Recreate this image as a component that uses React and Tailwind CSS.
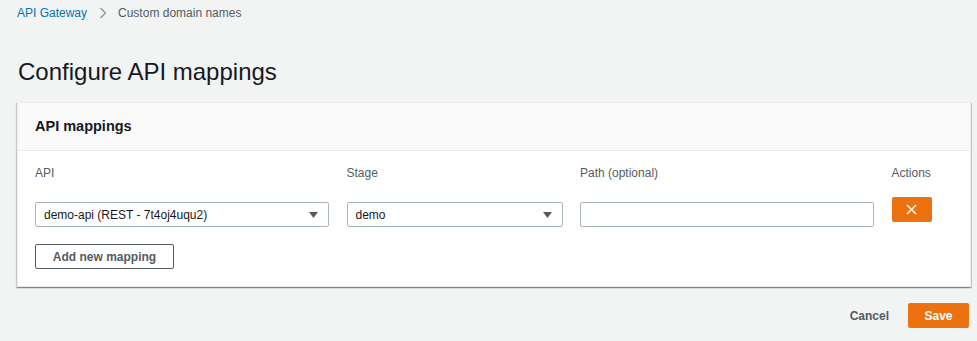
import { useState } from "react";

function Caret() {
  return (
    <svg width="9" height="6" viewBox="0 0 9 6" className="shrink-0">
      <path d="M0 0 L9 0 L4.5 6 Z" fill="#545b64" />
    </svg>
  );
}

function SelectBox({ value }) {
  return (
    <div className="h-[25px] flex items-center justify-between border border-[#aab7b8] rounded-[2px] bg-white pl-[8px] pr-[10px] text-[12px] text-[#16191f]">
      <span>{value}</span>
      <Caret />
    </div>
  );
}

export default function App() {
  const [rows] = useState([{ api: "demo-api (REST - 7t4oj4uqu2)", stage: "demo", path: "" }]);

  return (
    <div
      className="min-h-screen bg-[#f2f3f3] pl-[17px] pr-[6px]"
      style={{ fontFamily: '"Liberation Sans", Arial, sans-serif' }}
    >
      <div className="h-[26px] flex items-center text-[12px]">
        <span className="text-[#0073bb]">API Gateway</span>
        <svg width="8" height="12" viewBox="0 0 8 12" className="ml-[12px] mr-[11px]">
          <path d="M1.5 1 L6.5 6 L1.5 11" fill="none" stroke="#879596" strokeWidth="1.3" />
        </svg>
        <span className="text-[#545b64]">Custom domain names</span>
      </div>

      <h1 className="mt-[34px] mb-[18px] pl-[1px] text-[24px] leading-[24px] text-[#16191f]">
        Configure API mappings
      </h1>

      <div className="bg-white border border-[#eaeded] shadow-[0_1px_1px_0_rgba(0,28,36,0.3),1px_1px_1px_0_rgba(0,28,36,0.15),-1px_1px_1px_0_rgba(0,28,36,0.15)]">
        <div className="h-[48px] flex items-center px-[17px] bg-[#fafafa] border-b border-[#eaeded]">
          <h2 className="text-[14.5px] font-bold text-[#16191f]">API mappings</h2>
        </div>

        <div className="px-[17px] pt-[14px] pb-[17px]">
          <div className="grid grid-cols-[294px_216px_294px_40px] gap-x-[17.5px] items-start">
            <div className="text-[12px] leading-[16px] text-[#545b64]">API</div>
            <div className="text-[12px] leading-[16px] text-[#545b64]">Stage</div>
            <div className="text-[12px] leading-[16px] text-[#545b64]">Path (optional)</div>
            <div className="text-[12px] leading-[16px] text-[#545b64]">Actions</div>

            {rows.map((row, idx) => (
              <div key={idx} className="contents">
                <div className="mt-[21px]">
                  <SelectBox value={row.api} />
                </div>
                <div className="mt-[21px]">
                  <SelectBox value={row.stage} />
                </div>
                <div className="mt-[21px]">
                  <div className="h-[25px] border border-[#aab7b8] rounded-[2px] bg-white"></div>
                </div>
                <div className="mt-[16px]">
                  <button className="w-[40px] h-[25px] flex items-center justify-center bg-[#ec7211] rounded-[2px]">
                    <svg width="11" height="11" viewBox="0 0 11 11">
                      <path d="M1 1 L10 10 M10 1 L1 10" stroke="#fff" strokeWidth="1.5" />
                    </svg>
                  </button>
                </div>
              </div>
            ))}
          </div>

          <button className="mt-[17px] w-[139px] h-[25px] border border-[#545b64] rounded-[2px] bg-white text-[12px] font-bold text-[#545b64]">
            Add new mapping
          </button>
        </div>
      </div>

      <div className="mt-[16px] flex items-center justify-end pr-[2px] text-[12px] font-bold">
        <button className="text-[#545b64] mr-[19px]">Cancel</button>
        <button className="w-[61px] h-[25px] bg-[#ec7211] rounded-[2px] text-white">Save</button>
      </div>
    </div>
  );
}
